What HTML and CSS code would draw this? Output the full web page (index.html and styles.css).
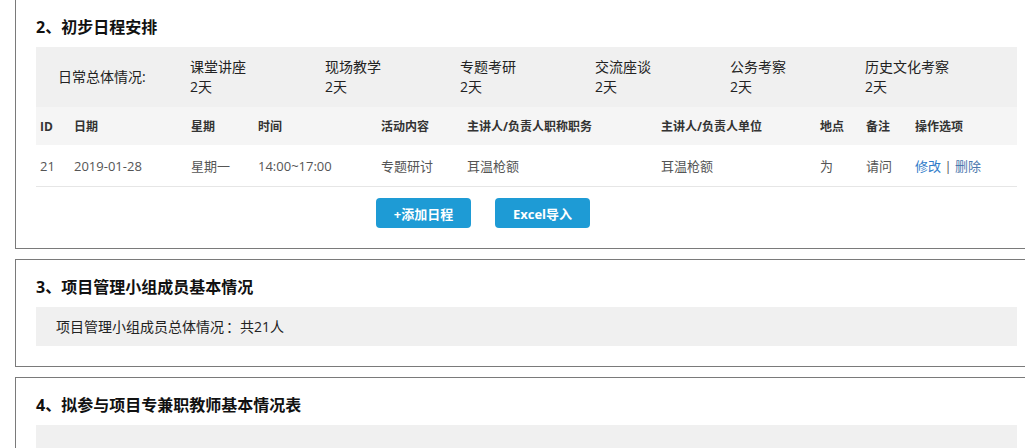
FILE: index.html
```html
<!DOCTYPE html>
<html lang="zh-CN">
  <head>
    <meta charset="UTF-8" />
    <meta name="viewport" content="width=device-width, initial-scale=1.0" />
    <title>项目申报</title>
    <link rel="stylesheet" href="styles.css">
  </head>
  <body>
    <div class="panel first">
      <h3 class="panel-title">2、初步日程安排</h3>
      <div class="summary">
        <div class="summary-label">日常总体情况:</div>
        <div class="summary-item"><div>课堂讲座</div><div>2天</div></div>
        <div class="summary-item"><div>现场教学</div><div>2天</div></div>
        <div class="summary-item"><div>专题考研</div><div>2天</div></div>
        <div class="summary-item"><div>交流座谈</div><div>2天</div></div>
        <div class="summary-item"><div>公务考察</div><div>2天</div></div>
        <div class="summary-item"><div>历史文化考察</div><div>2天</div></div>
      </div>
      <table class="schedule">
        <colgroup>
          <col style="width: 34px">
          <col style="width: 117px">
          <col style="width: 67px">
          <col style="width: 123px">
          <col style="width: 86px">
          <col style="width: 194px">
          <col style="width: 159px">
          <col style="width: 46px">
          <col style="width: 49px">
          <col style="width: 106px">
        </colgroup>
        <thead>
          <tr>
            <th>ID</th>
            <th>日期</th>
            <th>星期</th>
            <th>时间</th>
            <th>活动内容</th>
            <th>主讲人/负责人职称职务</th>
            <th>主讲人/负责人单位</th>
            <th>地点</th>
            <th>备注</th>
            <th>操作选项</th>
          </tr>
        </thead>
        <tbody>
          <tr>
            <td>21</td>
            <td>2019-01-28</td>
            <td>星期一</td>
            <td>14:00~17:00</td>
            <td>专题研讨</td>
            <td>耳温枪额</td>
            <td>耳温枪额</td>
            <td>为</td>
            <td>请问</td>
            <td><a href="#" class="link-edit">修改</a> <span class="sep">|</span> <a href="#" class="link-del">删除</a></td>
          </tr>
        </tbody>
      </table>
      <div class="actions">
        <button class="btn">+添加日程</button>
        <button class="btn">Excel导入</button>
      </div>
    </div>

    <div class="panel">
      <h3 class="panel-title">3、项目管理小组成员基本情况</h3>
      <div class="info-bar">项目管理小组成员总体情况<span class="colon">：</span>共21人</div>
    </div>

    <div class="panel">
      <h3 class="panel-title">4、拟参与项目专兼职教师基本情况表</h3>
      <div class="info-bar"></div>
    </div>
  </body>
</html>
```

FILE: styles.css
```css
html,
body {
  overflow: hidden;
}
body {
  margin: 0;
  padding: 0;
  background: #fff;
  color: #222;
  font-family: "Open Sans", "Noto Sans CJK SC", sans-serif;
  font-size: 14px;
}
.panel {
  width: 1023px;
  box-sizing: border-box;
  margin: 0 0 10px 15px;
  padding: 16px 20px 20px;
  border: 1px solid #7a7a7a;
}
.panel.first {
  margin-top: -1px;
}
.panel-title {
  margin: 0 0 9px;
  font-size: 16px;
  line-height: 22px;
  font-weight: bold;
  color: #111;
}
.summary {
  display: flex;
  align-items: center;
  height: 60px;
  background: #f0f0f0;
  color: #222;
  font-size: 14px;
  line-height: 20px;
}
.summary-label {
  width: 154px;
  box-sizing: border-box;
  padding-left: 22px;
}
.summary-item {
  width: 135px;
}
.schedule {
  width: 981px;
  table-layout: fixed;
  border-collapse: collapse;
}
.schedule th {
  height: 38px;
  padding: 0 4px;
  background: #f5f5f5;
  text-align: left;
  font-size: 12px;
  font-weight: bold;
  color: #333;
}
.schedule td {
  height: 41px;
  padding: 0 4px;
  border-bottom: 1px solid #e6e6e6;
  font-size: 13px;
  color: #555;
  white-space: nowrap;
}
.schedule a {
  text-decoration: none;
}
.link-edit {
  color: #2f7bc9;
}
.link-del {
  color: #4b78ad;
}
.sep {
  color: #555;
}
.actions {
  display: flex;
  gap: 24px;
  padding: 11px 0 0 340px;
}
.btn {
  width: 95px;
  height: 30px;
  border: none;
  border-radius: 4px;
  background: #1e9bd5;
  color: #fff;
  font-family: "Open Sans", "Noto Sans CJK SC", sans-serif;
  font-size: 13px;
  font-weight: bold;
  cursor: pointer;
}
.info-bar {
  height: 39px;
  line-height: 39px;
  padding-left: 20px;
  background: #f0f0f0;
  font-size: 14px;
  color: #222;
}
.colon {
  padding-left: 2px;
}
```
